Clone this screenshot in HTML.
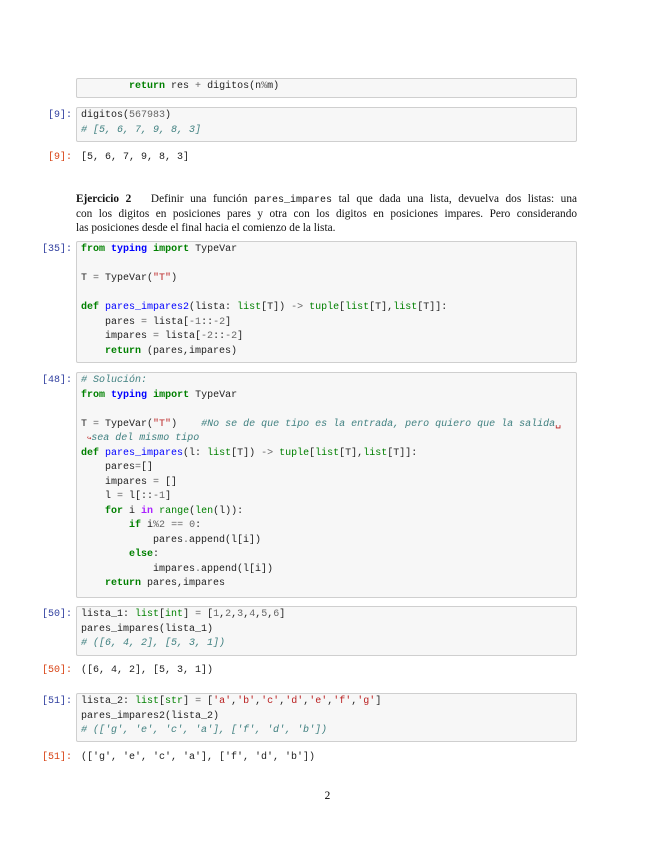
<!DOCTYPE html>
<html><head><meta charset="utf-8"><style>
body{margin:0;width:655px;height:848px;background:#fff;position:relative;overflow:hidden}
.box{position:absolute;left:76px;width:501px;background:#f7f7f7;border:1px solid #cfcfcf;border-radius:2px;box-sizing:border-box}
pre{margin:0;font-family:"Liberation Mono",monospace;font-size:10px;line-height:14.5px;color:#222;white-space:pre}
.code{position:absolute;left:81px}
.p{position:absolute;font-family:"Liberation Mono",monospace;font-size:10px;line-height:14.5px;right:583px;text-align:right;color:#303f9f}
.o{color:#d84315}
.k{color:#008000;font-weight:bold}.b{color:#0000ff}.bi{color:#008000}.c{color:#408080;font-style:italic}.n{color:#666}.s{color:#ba2121}.ip{color:#aa22ff;font-weight:bold}
.txt{position:absolute;left:76px;width:501px;font-family:"Liberation Serif",serif;font-size:11.3px;line-height:14.6px;color:#111;white-space:nowrap}
.j{text-align:justify;text-align-last:justify;height:14.6px}
.j span.m{font-family:'Liberation Mono',monospace;font-size:10px;line-height:0}
</style></head><body>
<div class="box" style="top:78px;height:20px"></div>
<pre class="code" style="top:80px">        <span class="k">return</span> res <span class="n">+</span> digitos(n<span class="n">%</span>m)</pre>

<div class="p" style="top:109px">[9]:</div>
<div class="box" style="top:107px;height:35px"></div>
<pre class="code" style="top:109px">digitos(<span class="n">567983</span>)
<span class="c"># [5, 6, 7, 9, 8, 3]</span></pre>
<div class="p o" style="top:151px">[9]:</div>
<pre class="code" style="top:151px">[5, 6, 7, 9, 8, 3]</pre>

<div class="txt" style="top:192px">
<div class="j" style="white-space:normal"><b>Ejercicio 2</b>&nbsp;&nbsp; Definir una función <span class="m">pares_impares</span> tal que dada una lista, devuelva dos listas: una</div>
<div class="j" style="white-space:normal">con los digitos en posiciones pares y otra con los digitos en posiciones impares. Pero considerando</div>
<div>las posiciones desde el final hacia el comienzo de la lista.</div>
</div>

<div class="p" style="top:243px">[35]:</div>
<div class="box" style="top:241px;height:122px"></div>
<pre class="code" style="top:243px"><span class="k">from</span> <span class="b" style="font-weight:bold">typing</span> <span class="k">import</span> TypeVar

T <span class="n">=</span> TypeVar(<span class="s">"T"</span>)

<span class="k">def</span> <span class="b">pares_impares2</span>(lista: <span class="bi">list</span>[T]) <span class="n">-&gt;</span> <span class="bi">tuple</span>[<span class="bi">list</span>[T],<span class="bi">list</span>[T]]:
    pares <span class="n">=</span> lista[<span class="n">-1</span>::<span class="n">-2</span>]
    impares <span class="n">=</span> lista[<span class="n">-2</span>::<span class="n">-2</span>]
    <span class="k">return</span> (pares,impares)</pre>

<div class="p" style="top:374px">[48]:</div>
<div class="box" style="top:372px;height:226px"></div>
<pre class="code" style="top:374px"><span class="c"># Solución:</span>
<span class="k">from</span> <span class="b" style="font-weight:bold">typing</span> <span class="k">import</span> TypeVar

T <span class="n">=</span> TypeVar(<span class="s">"T"</span>)    <span class="c">#No se de que tipo es la entrada, pero quiero que la salida</span><span class="s">␣</span>
<span class="c"> <span class="s" style="font-size:7px">↪</span>sea del mismo tipo</span>
<span class="k">def</span> <span class="b">pares_impares</span>(l: <span class="bi">list</span>[T]) <span class="n">-&gt;</span> <span class="bi">tuple</span>[<span class="bi">list</span>[T],<span class="bi">list</span>[T]]:
    pares<span class="n">=</span>[]
    impares <span class="n">=</span> []
    l <span class="n">=</span> l[::<span class="n">-1</span>]
    <span class="k">for</span> i <span class="ip">in</span> <span class="bi">range</span>(<span class="bi">len</span>(l)):
        <span class="k">if</span> i<span class="n">%2</span> <span class="n">==</span> <span class="n">0</span>:
            pares<span class="n">.</span>append(l[i])
        <span class="k">else</span>:
            impares<span class="n">.</span>append(l[i])
    <span class="k">return</span> pares,impares</pre>

<div class="p" style="top:608px">[50]:</div>
<div class="box" style="top:606px;height:50px"></div>
<pre class="code" style="top:608px">lista_1: <span class="bi">list</span>[<span class="bi">int</span>] <span class="n">=</span> [<span class="n">1</span>,<span class="n">2</span>,<span class="n">3</span>,<span class="n">4</span>,<span class="n">5</span>,<span class="n">6</span>]
pares_impares(lista_1)
<span class="c"># ([6, 4, 2], [5, 3, 1])</span></pre>
<div class="p o" style="top:664px">[50]:</div>
<pre class="code" style="top:664px">([6, 4, 2], [5, 3, 1])</pre>

<div class="p" style="top:695px">[51]:</div>
<div class="box" style="top:693px;height:49px"></div>
<pre class="code" style="top:695px">lista_2: <span class="bi">list</span>[<span class="bi">str</span>] <span class="n">=</span> [<span class="s">'a'</span>,<span class="s">'b'</span>,<span class="s">'c'</span>,<span class="s">'d'</span>,<span class="s">'e'</span>,<span class="s">'f'</span>,<span class="s">'g'</span>]
pares_impares2(lista_2)
<span class="c"># (['g', 'e', 'c', 'a'], ['f', 'd', 'b'])</span></pre>
<div class="p o" style="top:751px">[51]:</div>
<pre class="code" style="top:751px">(['g', 'e', 'c', 'a'], ['f', 'd', 'b'])</pre>

<div style="position:absolute;top:790px;left:0;width:655px;text-align:center;font-family:'Liberation Serif',serif;font-size:11.3px">2</div>
</body></html>
